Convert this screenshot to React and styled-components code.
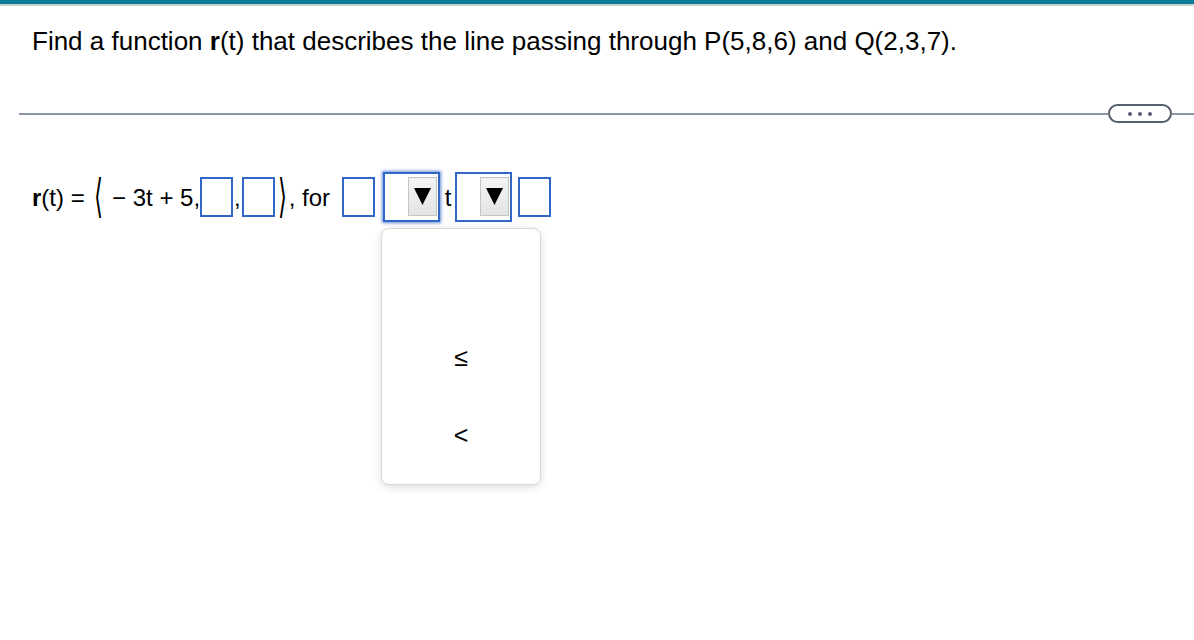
import styled, { createGlobalStyle } from "styled-components";

const GlobalStyle = createGlobalStyle`
  html, body {
    margin: 0;
    padding: 0;
    background: #fff;
  }
  body {
    font-family: "Liberation Sans", Arial, sans-serif;
    color: #000;
  }
`;

const Page = styled.div`
  width: 1194px;
  height: 640px;
  border-top: 4px solid #0b7b98;
  box-sizing: border-box;
  position: relative;
  overflow: hidden;
`;

const TopEdge = styled.div`
  height: 2px;
  background: #c8d0d8;
`;

const Question = styled.p`
  margin: 0;
  padding: 20px 0 0 32px;
  font-size: 26px;
  line-height: 30px;
  b {
    font-weight: bold;
  }
`;

const Divider = styled.div`
  display: flex;
  align-items: center;
  margin: 48px 0 0 19px;
`;

const Rule = styled.div`
  flex: ${(p) => (p.$grow ? 1 : "none")};
  width: ${(p) => (p.$grow ? "auto" : "22px")};
  height: 2px;
  background: #8c95a4;
`;

const MorePill = styled.button`
  width: 64px;
  height: 19px;
  box-sizing: border-box;
  border: 2px solid #56606e;
  border-radius: 10px;
  background: #fff;
  padding: 0;
  display: flex;
  align-items: center;
  justify-content: center;
  gap: 6px;
  span {
    width: 4px;
    height: 4px;
    border-radius: 50%;
    background: #56606e;
  }
`;

const MathRow = styled.div`
  display: flex;
  align-items: center;
  margin: 47px 0 0 32px;
  font-size: 24px;
  height: 53px;
`;

const Txt = styled.span`
  white-space: pre;
  margin: ${(p) => p.$m || "0"};
  font-weight: ${(p) => (p.$bold ? "bold" : "normal")};
  position: relative;
  top: 1px;
`;

const Bracket = styled.span`
  display: inline-block;
  font-family: "DejaVu Sans", sans-serif;
  font-size: 46px;
  line-height: 46px;
  font-weight: 200;
  transform: scaleX(0.5);
  margin: ${(p) => p.$m || "0"};
  position: relative;
  top: -1px;
`;

const AnswerBox = styled.span`
  display: inline-block;
  width: 33px;
  height: 40px;
  box-sizing: border-box;
  border: 2px solid #3167c9;
  margin: ${(p) => p.$m || "0"};
`;

const SelectWrap = styled.span`
  position: relative;
  display: inline-flex;
  align-items: center;
  justify-content: flex-end;
  width: 57px;
  height: 50px;
  box-sizing: border-box;
  border: 2px solid #3167c9;
  padding-right: 1px;
  margin: ${(p) => p.$m || "0"};
  box-shadow: ${(p) =>
    p.$focused ? "0 0 3px 1px rgba(49, 103, 201, 0.75)" : "none"};
`;

const ArrowButton = styled.span`
  width: 29px;
  height: 39px;
  box-sizing: border-box;
  border: 1px solid #c4c4c4;
  background: linear-gradient(#f4f4f4, #e4e4e4);
  display: flex;
  align-items: center;
  justify-content: center;
`;

const Popup = styled.div`
  position: absolute;
  left: 381px;
  top: 224px;
  width: 160px;
  height: 257px;
  box-sizing: border-box;
  border: 1px solid #d8d8d8;
  border-radius: 8px;
  background: #fff;
  box-shadow: 0 2px 8px rgba(0, 0, 0, 0.14);
  display: flex;
  flex-direction: column;
  align-items: center;
  padding-top: 116px;
  gap: 54px;
`;

const Option = styled.div`
  font-size: 25px;
  line-height: 24px;
  height: 24px;
`;

function Triangle() {
  return (
    <svg width="19" height="19" viewBox="0 0 19 19">
      <polygon points="1,1 18,1 9.5,18" fill="#000" />
    </svg>
  );
}

export default function App() {
  return (
    <>
      <GlobalStyle />
      <Page>
        <TopEdge />
        <Question>
          Find a function <b>r</b>(t) that describes the line passing through
          P(5,8,6) and Q(2,3,7).
        </Question>
        <Divider>
          <Rule $grow />
          <MorePill aria-label="more">
            <span />
            <span />
            <span />
          </MorePill>
          <Rule />
        </Divider>
        <MathRow>
          <Txt $bold>r</Txt>
          <Txt>(t) = </Txt>
          <Bracket $m="0 -2px 0 -2px">⟨</Bracket>
          <Txt> − 3t + 5,</Txt>
          <AnswerBox />
          <Txt $m="0 1px 0 1px">,</Txt>
          <AnswerBox />
          <Bracket $m="0 -2px 0 -2px">⟩</Bracket>
          <Txt>, for </Txt>
          <AnswerBox $m="0 0 0 5px" />
          <SelectWrap $focused $m="0 0 0 8px">
            <ArrowButton>
              <Triangle />
            </ArrowButton>
          </SelectWrap>
          <Txt $m="0 4px 0 5px">t</Txt>
          <SelectWrap $m="0">
            <ArrowButton>
              <Triangle />
            </ArrowButton>
          </SelectWrap>
          <AnswerBox $m="0 0 0 6px" />
        </MathRow>
        <Popup>
          <Option>≤</Option>
          <Option>&lt;</Option>
        </Popup>
      </Page>
    </>
  );
}
